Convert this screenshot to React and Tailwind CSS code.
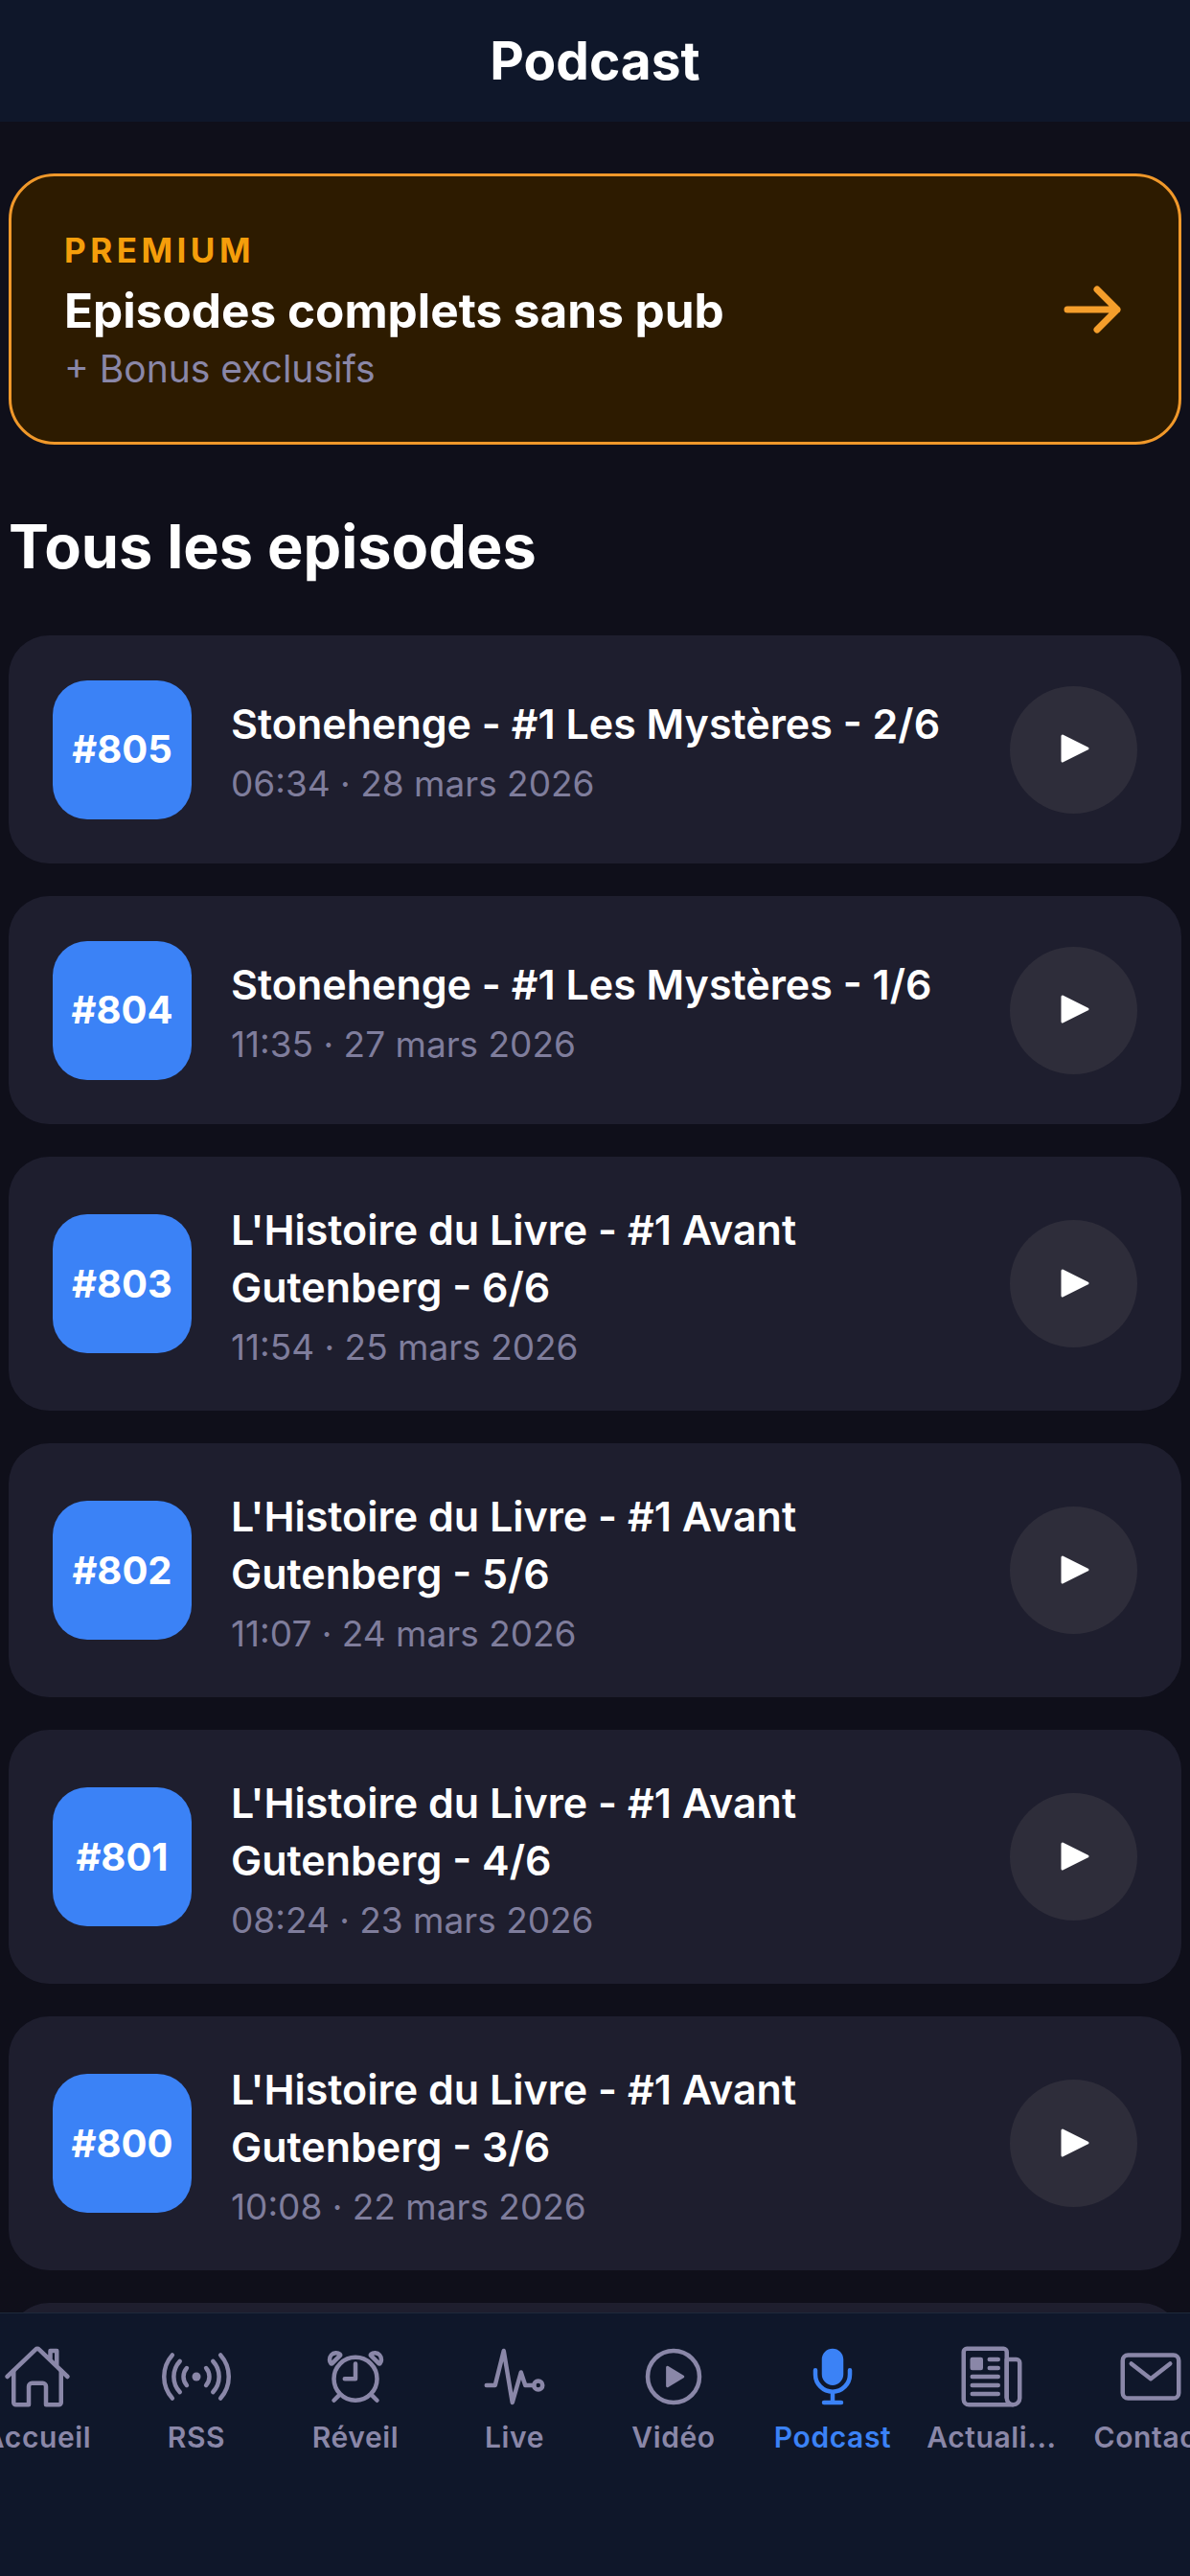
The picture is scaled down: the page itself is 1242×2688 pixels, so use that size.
import React from "react";
import { IoHomeOutline, IoRadioOutline, IoAlarmOutline, IoPulseOutline, IoPlayCircleOutline, IoMic, IoNewspaperOutline, IoMailOutline } from "react-icons/io5";

const episodes = [
  { n: "#805", t: ["Stonehenge - #1 Les Mystères - 2/6"], d: "06:34 · 28 mars 2026" },
  { n: "#804", t: ["Stonehenge - #1 Les Mystères - 1/6"], d: "11:35 · 27 mars 2026" },
  { n: "#803", t: ["L'Histoire du Livre - #1 Avant", "Gutenberg - 6/6"], d: "11:54 · 25 mars 2026" },
  { n: "#802", t: ["L'Histoire du Livre - #1 Avant", "Gutenberg - 5/6"], d: "11:07 · 24 mars 2026" },
  { n: "#801", t: ["L'Histoire du Livre - #1 Avant", "Gutenberg - 4/6"], d: "08:24 · 23 mars 2026" },
  { n: "#800", t: ["L'Histoire du Livre - #1 Avant", "Gutenberg - 3/6"], d: "10:08 · 22 mars 2026" },
  { n: "#799", t: ["L'Histoire du Livre - #1 Avant", "Gutenberg - 2/6"], d: "09:41 · 21 mars 2026" },
];

const tabs = [
  { l: "Accueil", I: IoHomeOutline },
  { l: "RSS", I: IoRadioOutline },
  { l: "Réveil", I: IoAlarmOutline },
  { l: "Live", I: IoPulseOutline },
  { l: "Vidéo", I: IoPlayCircleOutline },
  { l: "Podcast", I: IoMic, active: true },
  { l: "Actuali...", I: IoNewspaperOutline },
  { l: "Contact", I: IoMailOutline },
];

function Card({ e }) {
  return (
    <div className="mb-[34px] flex min-h-[238px] items-center rounded-[42px] bg-[#1e1e2e] py-[39.5px] pr-[46px] pl-[46px]">
      <div className="flex h-[145px] w-[145px] shrink-0 items-center justify-center rounded-[36px] bg-[#3b82f6] text-[40px] font-bold text-white">
        {e.n}
      </div>
      <div className="ml-[41px] flex-1 pt-[6px]">
        {e.t.map((line) => (
          <div key={line} className="text-[43px] leading-[60px] font-semibold whitespace-nowrap text-white">{line}</div>
        ))}
        <div className="mt-[6px] text-[37px] leading-[54px] text-[#7f7d9c]">{e.d}</div>
      </div>
      <div className="flex h-[133px] w-[133px] shrink-0 items-center justify-center rounded-full bg-[#2e2d3a]">
        <svg width="32" height="32" viewBox="0 0 32 32" className="translate-x-[1px] -translate-y-[1px]">
          <path d="M3 3 L29 16 L3 29 Z" fill="#fff" stroke="#fff" strokeWidth="3" strokeLinejoin="round" />
        </svg>
      </div>
    </div>
  );
}

export default function App() {
  return (
    <div className="flex h-[2688px] w-[1242px] flex-col overflow-hidden bg-[#0f0f1a] font-['Inter',sans-serif]">
      <header className="flex h-[127px] shrink-0 items-center justify-center bg-[#0f172a]">
        <span className="text-[55px] font-bold text-white">Podcast</span>
      </header>
      <main className="min-h-0 flex-1 overflow-hidden px-[9px] pt-[54px]">
        <div className="flex h-[283px] items-center justify-between rounded-[48px] border-[3px] border-[#f0982a] bg-[#2d1b00] pr-[60px] pl-[55px]">
          <div className="pt-[6px]">
            <div className="text-[35px] leading-[42px] font-bold tracking-[4.5px] text-[#f59e0b]">PREMIUM</div>
            <div className="mt-[9px] text-[49.5px] leading-[66px] font-bold text-white">Episodes complets sans pub</div>
            <div className="mt-[1px] text-[39px] leading-[54px] text-[#8a87a8]">+ Bonus exclusifs</div>
          </div>
          <svg width="60" height="50" viewBox="0 0 60 50" fill="none" stroke="#f59e2b" strokeWidth="7" strokeLinecap="round" strokeLinejoin="round">
            <path d="M4 25 H56 M35 4 L56 25 L35 46" />
          </svg>
        </div>
        <h2 className="mt-[66px] mb-[53px] text-[63px] leading-[80px] font-bold text-white">Tous les episodes</h2>
        {episodes.map((e) => <Card key={e.n} e={e} />)}
      </main>
      <nav className="flex h-[275px] shrink-0 items-start overflow-hidden border-t-[1px] border-[#1e293b] bg-[#0f172a] pt-[30px]">
        <div className="ml-[-44px] flex">
          {tabs.map(({ l, I, active }) => (
            <div key={l} className={`flex w-[166px] shrink-0 flex-col items-center ${active ? "text-[#3b82f6]" : "text-[#8a87a8]"}`}>
              <I size={72} />
              <span className="mt-[6px] text-[30px] leading-[42px] font-semibold tracking-[0.6px] whitespace-nowrap">{l}</span>
            </div>
          ))}
        </div>
      </nav>
    </div>
  );
}
